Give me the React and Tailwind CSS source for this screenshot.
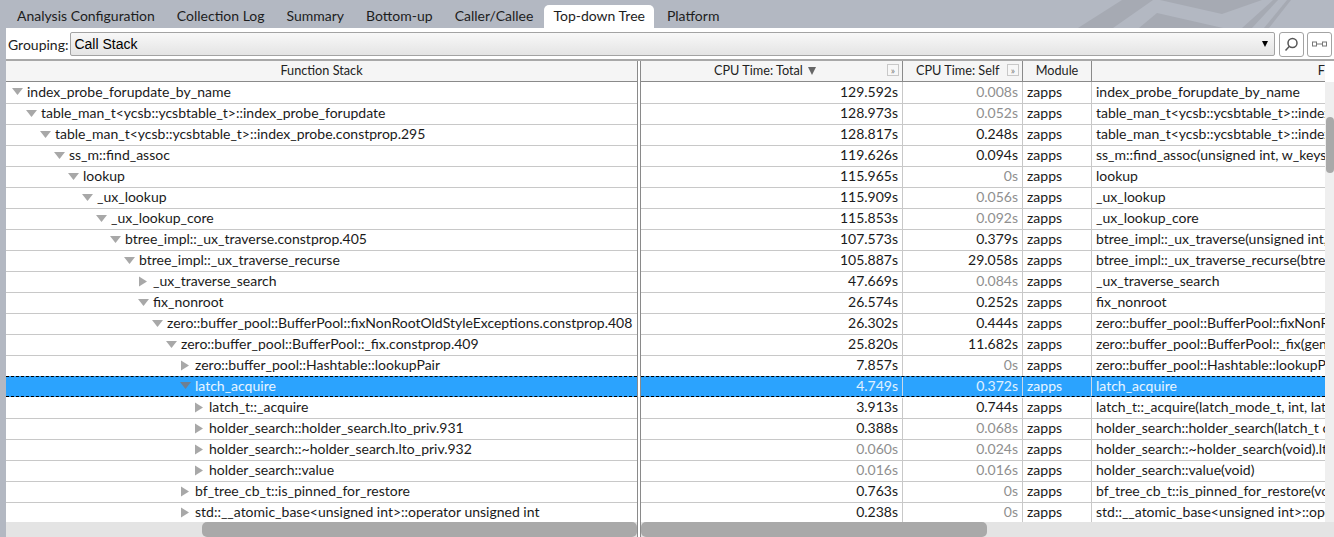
const tabs = [
  "Analysis Configuration",
  "Collection Log",
  "Summary",
  "Bottom-up",
  "Caller/Callee",
  "Top-down Tree",
  "Platform",
];

// name, depth, expanded, total, self, full name (last column)
const rows = [
  ["index_probe_forupdate_by_name", 0, true, "129.592s", "0.008s", "index_probe_forupdate_by_name"],
  ["table_man_t<ycsb::ycsbtable_t>::index_probe_forupdate", 1, true, "128.973s", "0.052s", "table_man_t<ycsb::ycsbtable_t>::index_probe_forupdate"],
  ["table_man_t<ycsb::ycsbtable_t>::index_probe.constprop.295", 2, true, "128.817s", "0.248s", "table_man_t<ycsb::ycsbtable_t>::index_probe"],
  ["ss_m::find_assoc", 3, true, "119.626s", "0.094s", "ss_m::find_assoc(unsigned int, w_keystr_t"],
  ["lookup", 4, true, "115.965s", "0s", "lookup"],
  ["_ux_lookup", 5, true, "115.909s", "0.056s", "_ux_lookup"],
  ["_ux_lookup_core", 6, true, "115.853s", "0.092s", "_ux_lookup_core"],
  ["btree_impl::_ux_traverse.constprop.405", 7, true, "107.573s", "0.379s", "btree_impl::_ux_traverse(unsigned int, w_keystr"],
  ["btree_impl::_ux_traverse_recurse", 8, true, "105.887s", "29.058s", "btree_impl::_ux_traverse_recurse(btree_page"],
  ["_ux_traverse_search", 9, false, "47.669s", "0.084s", "_ux_traverse_search"],
  ["fix_nonroot", 9, true, "26.574s", "0.252s", "fix_nonroot"],
  ["zero::buffer_pool::BufferPool::fixNonRootOldStyleExceptions.constprop.408", 10, true, "26.302s", "0.444s", "zero::buffer_pool::BufferPool::fixNonRootOldStyle"],
  ["zero::buffer_pool::BufferPool::_fix.constprop.409", 11, true, "25.820s", "11.682s", "zero::buffer_pool::BufferPool::_fix(generic_page"],
  ["zero::buffer_pool::Hashtable::lookupPair", 12, false, "7.857s", "0s", "zero::buffer_pool::Hashtable::lookupPair(unsigned"],
  ["latch_acquire", 12, true, "4.749s", "0.372s", "latch_acquire"],
  ["latch_t::_acquire", 13, false, "3.913s", "0.744s", "latch_t::_acquire(latch_mode_t, int, latch_t"],
  ["holder_search::holder_search.lto_priv.931", 13, false, "0.388s", "0.068s", "holder_search::holder_search(latch_t const*)"],
  ["holder_search::~holder_search.lto_priv.932", 13, false, "0.060s", "0.024s", "holder_search::~holder_search(void).lto_priv"],
  ["holder_search::value", 13, false, "0.016s", "0.016s", "holder_search::value(void)"],
  ["bf_tree_cb_t::is_pinned_for_restore", 12, false, "0.763s", "0s", "bf_tree_cb_t::is_pinned_for_restore(void) const"],
  ["std::__atomic_base<unsigned int>::operator unsigned int", 12, false, "0.238s", "0s", "std::__atomic_base<unsigned int>::operator unsigned"],
];

const SELECTED = 14;
const lato = { fontFamily: "Lato, sans-serif" };

function Twisty({ open, selected }) {
  return (
    <svg width="11" height="11" viewBox="0 0 11 11" className="shrink-0">
      {open ? (
        <path d="M0 2h11L5.5 9z" fill={selected ? "#6f7f92" : "#a8a8a8"} />
      ) : (
        <path d="M1 0.5v10l8-5z" fill="#a8a8a8" />
      )}
    </svg>
  );
}

function Tabs() {
  return (
    <div className="relative h-[28px] bg-[#b3b8c2] overflow-hidden flex items-end pl-[6px] text-[14px] text-[#1d1d1d]">
      <svg className="absolute right-0 top-0" width="294" height="28" viewBox="0 0 294 28" fill="#a6aab3">
        <path d="M38 28 L82 0 L113 0 L73 28z" />
        <path d="M120 0 L182 14 L222 0z" />
        <path d="M99 28 L117 13 L183 28z" />
        <path d="M202 28 L233 0 L238 0 L212 28z" />
        <path d="M224 28 L247 0 L251 0 L229 28z" />
      </svg>
      {tabs.map((t) =>
        t === "Top-down Tree" ? (
          <div key={t} className="relative h-[23px] px-[9px] pb-[2px] mr-[2px] flex items-center bg-white rounded-t-[5px]" style={lato}>
            {t}
          </div>
        ) : (
          <div key={t} className="relative h-[23px] px-[11px] pb-[2px] flex items-center" style={lato}>
            {t}
          </div>
        )
      )}
    </div>
  );
}

function Toolbar() {
  return (
    <div className="h-[33px] flex items-center bg-white border-b-2 border-[#a8a8a8] pl-[2px] pr-[2px] pt-[1px]">
      <span className="text-[14px] text-[#222] mr-[2px]" style={lato}>Grouping:</span>
      <div className="flex-1 h-[24px] flex items-center justify-between bg-gradient-to-b from-[#f8f8f8] to-[#e4e4e4] border border-[#a3a3a3] rounded-[2px] pl-[3px] pr-[6px]">
        <span className="text-[14px] text-black font-['Liberation_Sans',sans-serif]">Call Stack</span>
        <span className="w-0 h-0 border-l-[3.5px] border-r-[3.5px] border-t-[6px] border-l-transparent border-r-transparent border-t-black" />
      </div>
      <button className="ml-[4px] w-[25px] h-[25px] flex items-center justify-center border border-[#a3a3a3] rounded-[3px] bg-white">
        <svg width="15" height="15" viewBox="0 0 15 15" fill="none" stroke="#555" strokeWidth="1.5">
          <circle cx="8.5" cy="6" r="4.5" />
          <path d="M5.2 9.5 L1.5 13.5" />
        </svg>
      </button>
      <button className="ml-[3px] w-[25px] h-[25px] flex items-center justify-center border border-[#a3a3a3] rounded-[3px] bg-white">
        <svg width="15" height="7" viewBox="0 0 15 7" fill="none" stroke="#777" strokeWidth="1">
          <rect x="0.5" y="1" width="4" height="4" />
          <rect x="10.5" y="1" width="4" height="4" />
          <path d="M5 3h5" />
        </svg>
      </button>
    </div>
  );
}

function ExpandIcon() {
  return (
    <span className="w-[12px] h-[12px] border border-[#c8c8c8] bg-[#f7f7f7] flex items-center justify-center text-[10px] leading-none text-[#777]" style={lato}>
      »
    </span>
  );
}

function Divider() {
  return <div className="w-[4px] shrink-0 bg-white border-x border-[#8a8a8a]" />;
}

function Header() {
  return (
    <div className="h-[21px] flex text-[12.7px] text-[#222]" style={lato}>
      <div className="w-[631px] flex items-center justify-center bg-[#f5f5f5] border-b border-[#8a8a8a]">Function Stack</div>
      <Divider />
      <div className="w-[262px] relative flex items-center pl-[73px] bg-[#f5f5f5] border-b border-r border-[#8a8a8a]">
        <span className="mr-[5px]">CPU Time: Total</span>
        <span className="w-0 h-0 border-l-[4.5px] border-r-[4.5px] border-t-[8px] border-l-transparent border-r-transparent border-t-[#666]" />
        <span className="absolute right-[3px] top-[3px]"><ExpandIcon /></span>
      </div>
      <div className="w-[120px] relative flex items-center pl-[13px] bg-[#f5f5f5] border-b border-r border-[#8a8a8a]">
        CPU Time: Self
        <span className="absolute right-[3px] top-[3px]"><ExpandIcon /></span>
      </div>
      <div className="w-[69px] flex items-center justify-center bg-[#f5f5f5] border-b border-r border-[#8a8a8a]">Module</div>
      <div className="w-[233px] overflow-hidden flex items-center justify-end bg-[#f5f5f5] border-b border-[#8a8a8a]">F</div>
    </div>
  );
}

function Row({ row, index }) {
  const [name, depth, open, total, self, full] = row;
  const selected = index === SELECTED;
  // the first row is a pixel taller, the selected one sits a pixel higher
  const height = index === 0 ? "h-[22px]" : selected ? "h-[22px] -mt-[1px]" : "h-[21px]";
  const rule = selected
    ? "h-[21px] bg-[#2ba3fe] border-y border-dashed border-black"
    : "bg-white border-b border-[#c8c8c8]";
  const line = selected ? "border-[#c9d8e8]" : "border-[#c8c8c8]";
  const numColor = (v) =>
    selected ? "text-white/85" : parseFloat(v) < 0.093 ? "text-[#8f8f8f]" : "text-[#1a1a1a]";
  return (
    <div
      className={`${height} flex text-[14px] leading-none whitespace-nowrap bg-white ${selected ? "text-white/90" : "text-[#1a1a1a]"}`}
      style={lato}
    >
      <div className={`w-[631px] flex items-center gap-[4px] overflow-hidden pb-[2px] ${rule}`} style={{ paddingLeft: 6 + depth * 14 }}>
        <Twisty open={open} selected={selected} />
        <span>{name}</span>
      </div>
      <Divider />
      <div className={`flex-1 flex min-w-0 ${rule}`}>
        <div className={`w-[262px] flex items-center justify-end pr-[4px] pb-[2px] border-r ${line} ${numColor(total)}`}>{total}</div>
        <div className={`w-[120px] flex items-center justify-end pr-[4px] pb-[2px] border-r ${line} ${numColor(self)}`}>{self}</div>
        <div className={`w-[69px] flex items-center pl-[4px] pb-[2px] border-r ${line}`}>zapps</div>
        <div className="flex-1 flex items-center pl-[4px] pb-[2px] overflow-hidden">{full}</div>
      </div>
    </div>
  );
}

function Scrollbars() {
  return (
    <div className="h-[15px] flex bg-[#e4e4e4]">
      <div className="w-[631px] h-full flex justify-end">
        <div className="w-[435px] h-full rounded-[5px] bg-[#a9a9a9]" />
      </div>
      <Divider />
      <div className="flex-1">
        <div className="w-[346px] h-full rounded-[5px] bg-[#a9a9a9]" />
      </div>
    </div>
  );
}

export default function App() {
  return (
    <div className="w-[1334px] h-[537px] overflow-hidden bg-[#b3b8c2] flex flex-col">
      <Tabs />
      <div className="flex-1 ml-[6px] bg-white flex flex-col min-h-0">
        <Toolbar />
        <Header />
        <div className="flex-1 min-h-0 flex overflow-hidden">
          <div className="w-[1319px] shrink-0 overflow-hidden">
            {rows.map((r, i) => (
              <Row key={r[0]} row={r} index={i} />
            ))}
          </div>
          <div className="flex-1 bg-[#efefef] relative">
            <div className="absolute left-[1px] right-0 top-[35px] h-[56px] rounded-[4px] bg-[#a9a9a9]" />
          </div>
        </div>
        <Scrollbars />
      </div>
    </div>
  );
}
